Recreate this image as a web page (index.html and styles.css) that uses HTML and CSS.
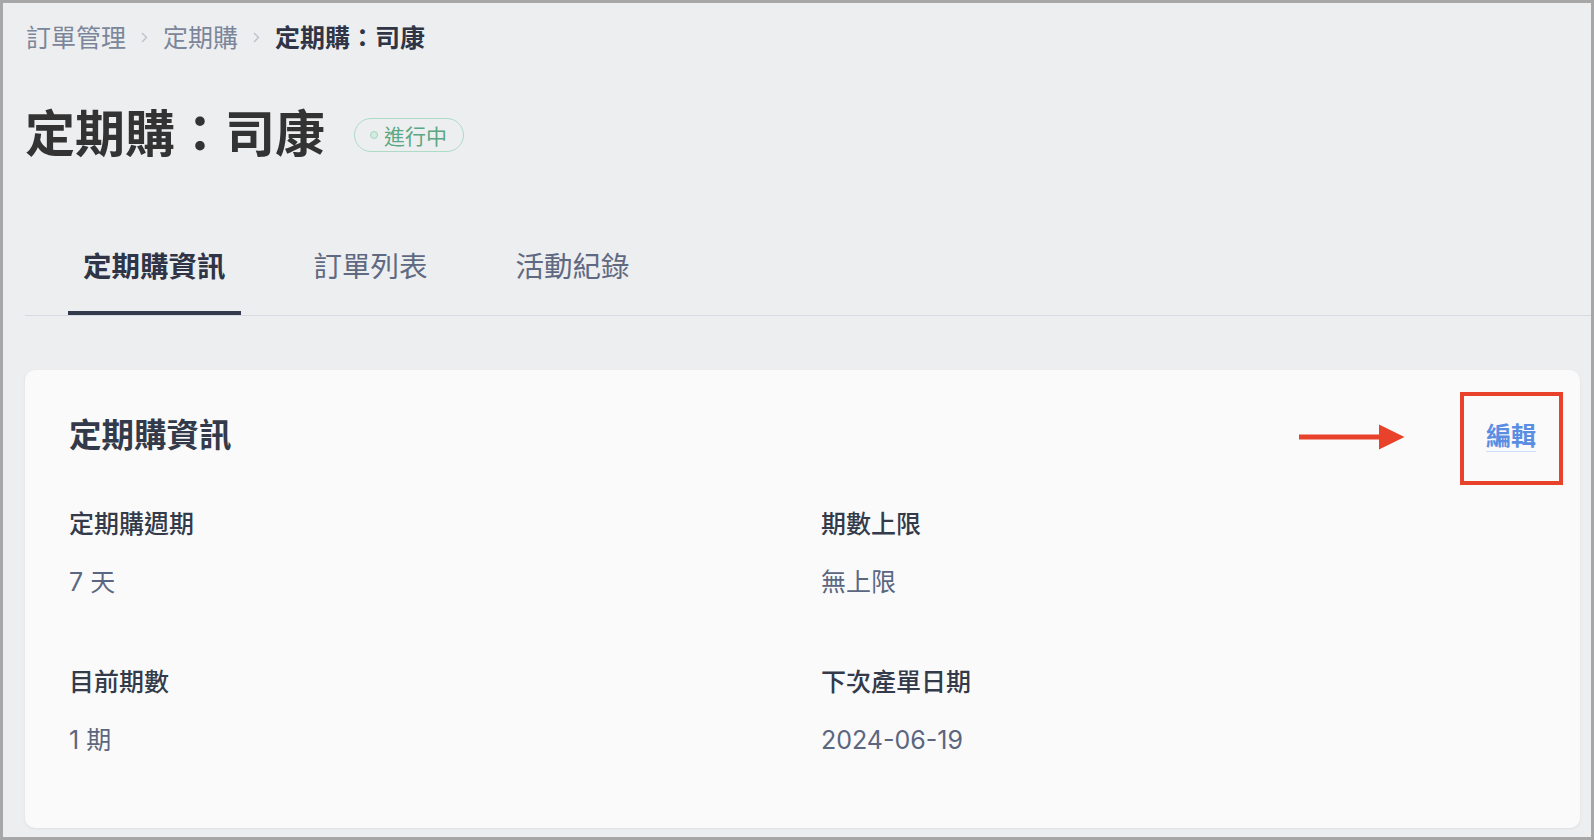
FILE: index.html
```html
<!DOCTYPE html>
<html lang="zh-Hant">

<head>
    <meta charset="UTF-8">
    <meta name="viewport" content="width=device-width, initial-scale=1.0">
    <title>定期購：司康</title>
    <link rel="stylesheet" href="styles.css">
</head>

<body>
    <div class="frame">
        <!-- 麵包屑 -->
        <nav class="crumbs">
            <a class="crumb">訂單管理</a>
            <svg class="sep" width="7" height="11" viewBox="0 0 7 11"><path d="M1 1l4.5 4.5L1 10" fill="none" stroke="#bcc1ca" stroke-width="1.4"/></svg>
            <a class="crumb">定期購</a>
            <svg class="sep" width="7" height="11" viewBox="0 0 7 11"><path d="M1 1l4.5 4.5L1 10" fill="none" stroke="#bcc1ca" stroke-width="1.4"/></svg>
            <span class="crumb current">定期購：司康</span>
        </nav>

        <div class="title-row">
            <h1 class="title">定期購：司康</h1>
            <span class="badge"><i class="dot"></i>進行中</span>
        </div>

        <div class="tabs">
            <a class="tab active">定期購資訊</a>
            <a class="tab">訂單列表</a>
            <a class="tab">活動紀錄</a>
        </div>

        <section class="card">
            <div class="card-head">
                <h2 class="card-title">定期購資訊</h2>
                <a class="edit">
                    <span class="edit-text">編輯</span>
                    <!-- 標註用的箭頭和紅框 -->
                    <svg class="arrow" width="106" height="26" viewBox="0 0 106 26">
                        <rect x="0" y="10.5" width="82" height="5" fill="#e8432a"/>
                        <polygon points="80,0.5 105.5,13 80,25.5" fill="#e8432a"/>
                    </svg>
                </a>
            </div>

            <div class="fields">
                <div class="field">
                    <div class="label">定期購週期</div>
                    <div class="value">7 天</div>
                </div>
                <div class="field">
                    <div class="label">期數上限</div>
                    <div class="value">無上限</div>
                </div>
                <div class="field">
                    <div class="label">目前期數</div>
                    <div class="value">1 期</div>
                </div>
                <div class="field">
                    <div class="label">下次產單日期</div>
                    <div class="value">2024-06-19</div>
                </div>
            </div>
        </section>
    </div>
</body>

</html>
```

FILE: styles.css
```css
* {
    box-sizing: border-box;
}

body {
    margin: 0;
    font-family: Inter, "Noto Sans CJK TC", "Noto Sans", sans-serif;
    background: #edeef0;
}

.frame {
    width: 1594px;
    height: 840px;
    border: 3px solid #a7a7a7;
    padding: 18px 0 0 22px;
    background: #edeef0;
    overflow: hidden;
}

/* 麵包屑 */
.crumbs {
    display: flex;
    align-items: center;
    gap: 15px;
    font-size: 25px;
    line-height: 34px;
    margin-left: 1px;
}

.crumb {
    color: #7c869a;
}

.crumb.current {
    color: #2f3546;
    font-weight: 700;
}

.sep {
    margin-top: -2px;
}

/* 標題 */
.title-row {
    display: flex;
    align-items: center;
    margin-top: 47px;
}

.title {
    margin: 0;
    font-size: 50px;
    line-height: 64px;
    font-weight: 700;
    color: #333333;
}

.badge {
    display: flex;
    align-items: center;
    height: 34px;
    margin: 2px 0 0 29px;
    padding: 0 16px 0 15px;
    border: 1px solid #acdcc6;
    border-radius: 17px;
    color: #5aa883;
    font-size: 21px;
}

.dot {
    width: 8px;
    height: 8px;
    border-radius: 50%;
    background: #d3ece0;
    border: 1px solid #a6d6bf;
    margin-right: 6px;
}

/* 分頁 */
.tabs {
    display: flex;
    gap: 58px;
    margin-top: 81px;
    padding-left: 43px;
    border-bottom: 1px solid #d6dbe3;
}

.tab {
    padding: 0 15px 24px;
    font-size: 28.5px;
    line-height: 40px;
    color: #5f6981;
    border-bottom: 4px solid transparent;
}

.tab.active {
    color: #2f3546;
    font-weight: 700;
    border-bottom-color: #333a4b;
}

/* 卡片 */
.card {
    margin: 54px 11px 0 0;
    padding: 44px 44px 71px;
    background: #fafafa;
    border-radius: 10px;
    box-shadow: 0 1px 3px rgba(30, 40, 60, 0.07);
}

.card-head {
    display: flex;
    justify-content: space-between;
    align-items: center;
}

.card-title {
    margin: 0;
    font-size: 32.5px;
    line-height: 44px;
    font-weight: 700;
    color: #333a4a;
}

.edit {
    position: relative;
    font-size: 25px;
    line-height: 34px;
    font-weight: 700;
    color: #5b8ee3;
}

.edit-text {
    border-bottom: 1px solid #cadcf6;
}

.edit::after {
    content: "";
    position: absolute;
    top: -27px;
    bottom: -32px;
    left: -26px;
    right: -27px;
    border: 4px solid #e8432a;
}

.arrow {
    position: absolute;
    left: -187px;
    top: 5px;
}

.fields {
    display: grid;
    grid-template-columns: 1fr 1fr;
    column-gap: 37px;
    row-gap: 66px;
    margin-top: 49px;
}

.label {
    font-size: 25px;
    line-height: 34px;
    font-weight: 500;
    color: #333a4a;
}

.value {
    margin-top: 24px;
    font-size: 25px;
    line-height: 34px;
    color: #5b6680;
}
```
